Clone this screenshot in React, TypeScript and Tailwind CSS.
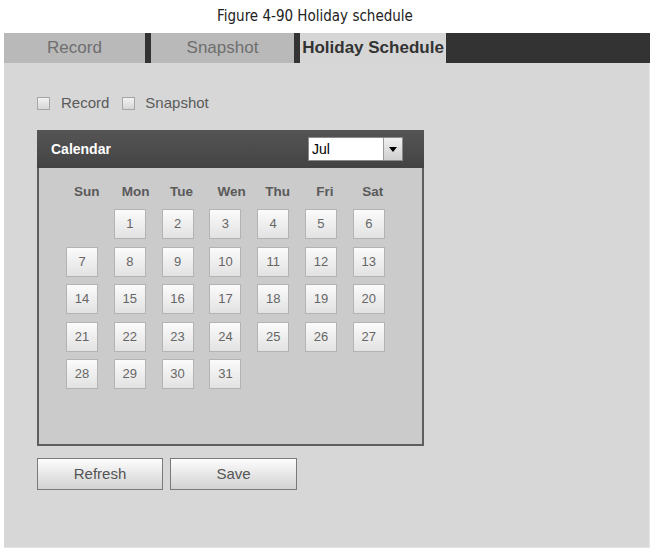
import React from "react";

const weeks: (number | null)[][] = [
  [null, 1, 2, 3, 4, 5, 6],
  [7, 8, 9, 10, 11, 12, 13],
  [14, 15, 16, 17, 18, 19, 20],
  [21, 22, 23, 24, 25, 26, 27],
  [28, 29, 30, 31, null, null, null],
];

const days = ["Sun", "Mon", "Tue", "Wen", "Thu", "Fri", "Sat"];

function Checkbox() {
  return (
    <div className="w-[13px] h-[13px] border border-[#a6a6a6] bg-gradient-to-b from-[#f2f2f2] to-[#d6d6d6]" />
  );
}

export default function App() {
  return (
    <div className="w-[654px] h-[551px] bg-white overflow-hidden font-['Liberation_Sans',Arial,sans-serif]">
      <div className="h-[33px] flex items-center justify-center pr-[24px] text-[15px] text-[#222] font-['Liberation_Sans_Narrow','DejaVu_Sans_Condensed',sans-serif]">
        Figure 4-90 Holiday schedule
      </div>
      <div className="ml-[4px] w-[646px] h-[30px] flex">
        <div className="w-[141px] bg-[#b9b9b9] flex items-center justify-center text-[17px] text-[#6e6e6e]">
          Record
        </div>
        <div className="w-[6px] bg-[#333]" />
        <div className="w-[143px] bg-[#b9b9b9] flex items-center justify-center text-[17px] text-[#6e6e6e]">
          Snapshot
        </div>
        <div className="w-[6px] bg-[#333]" />
        <div className="w-[146px] bg-[#d6d6d6] flex items-center justify-center text-[17px] font-bold text-[#333] whitespace-nowrap">
          Holiday Schedule
        </div>
        <div className="flex-1 bg-[#333]" />
      </div>
      <div className="ml-[4px] w-[646px] h-[485px] bg-[#d7d7d7] border-r border-b border-[#e4e4e4] pl-[33px] pt-[34px]">
        <div className="flex items-center h-[13px] text-[15px] text-[#5a5a5a]">
          <Checkbox />
          <span className="ml-[11px]">Record</span>
          <div className="ml-[13px]">
            <Checkbox />
          </div>
          <span className="ml-[10px]">Snapshot</span>
        </div>
        <div className="mt-[20px] w-[387px] h-[316px] flex flex-col">
          <div className="h-[38px] bg-gradient-to-b from-[#555] to-[#434343] flex items-center justify-between pl-[14px] pr-[21px]">
            <span className="text-white font-bold text-[14px]">Calendar</span>
            <div className="w-[95px] h-[24px] bg-white border border-[#8a8a8a] flex">
              <span className="flex-1 pl-[3px] text-[14px] text-black leading-[22px]">Jul</span>
              <div className="w-[19px] h-full bg-gradient-to-b from-[#f0f0f0] to-[#cfcfcf] border-l border-[#9a9a9a] flex items-center justify-center">
                <div className="w-0 h-0 border-l-[4px] border-r-[4px] border-t-[5px] border-l-transparent border-r-transparent border-t-black" />
              </div>
            </div>
          </div>
          <div className="flex-1 border-2 border-t-0 border-[#5e5e5e] bg-[#cbcbcb] pt-[16px] pl-[27px]">
            <div className="grid grid-cols-[repeat(7,32px)] gap-x-[15.8px] h-[16px]">
              {days.map((d) => (
                <div
                  key={d}
                  className="pl-[8px] text-center whitespace-nowrap text-[13.5px] font-bold text-[#5a5a5a] leading-[16px]"
                >
                  {d}
                </div>
              ))}
            </div>
            <div className="mt-[9px] grid grid-cols-[repeat(7,32px)] gap-x-[15.8px] gap-y-[7.5px]">
              {weeks.flat().map((n, i) =>
                n === null ? (
                  <div key={i} className="h-[30px]" />
                ) : (
                  <div
                    key={i}
                    className="h-[30px] border border-[#b3b3b3] bg-gradient-to-b from-[#fbfbfb] to-[#e2e2e2] flex items-center justify-center text-[13px] text-[#666]"
                  >
                    {n}
                  </div>
                )
              )}
            </div>
          </div>
        </div>
        <div className="mt-[12px] flex gap-[7px]">
          <div className="w-[126px] h-[32px] border border-[#7a7a7a] bg-gradient-to-b from-[#fdfdfd] to-[#d2d2d2] flex items-center justify-center text-[15px] text-[#555]">
            Refresh
          </div>
          <div className="w-[127px] h-[32px] border border-[#7a7a7a] bg-gradient-to-b from-[#fdfdfd] to-[#d2d2d2] flex items-center justify-center text-[15px] text-[#555]">
            Save
          </div>
        </div>
      </div>
    </div>
  );
}
